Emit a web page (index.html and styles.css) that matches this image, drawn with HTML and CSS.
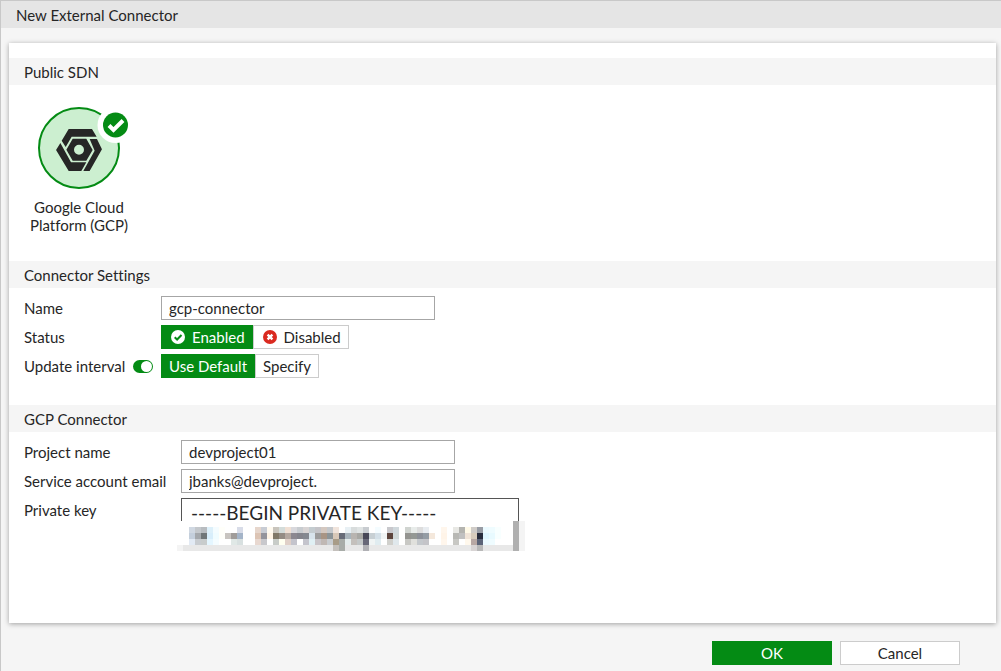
FILE: index.html
```
<!DOCTYPE html>
<html lang="en">
<head>
    <meta charset="utf-8">
    <title>New External Connector</title>
    <link rel="stylesheet" href="styles.css">
</head>
<body>
    <form class="dialog">
        <h1 class="dialog-title">New External Connector</h1>

        <div class="panel">
            <!-- Connector type -->
            <section class="section">
                <h2>Public SDN</h2>
                <button type="button" class="tile">
                    <svg class="tile-icon" viewBox="0 0 82 82" aria-hidden="true">
                        <circle cx="41" cy="41" r="40" fill="#ccefd0" stroke="#048b14" stroke-width="2"/>
                        <svg x="17.7" y="21.7" width="46.6" height="42.6" viewBox="107 101 140 128">
                            <path fill="#262626" d="M146 102H216L230 125H155L137 156L125 137Z"/>
                            <path fill="#262626" d="M121 144L153 202H199L184 228H146L108 165Z"/>
                            <path fill="#262626" d="M209 132H231L246 163L209 228H190L224 167Z"/>
                            <path fill="#262626" fill-rule="evenodd" d="M158 131H199L218 165L199 197H158L139 164ZM177 149A15 15 0 1 0 177 179A15 15 0 1 0 177 149Z"/>
                        </svg>
                        <circle cx="77.5" cy="18" r="18" fill="#fff"/>
                        <circle cx="77.5" cy="18" r="12.5" fill="#048b14"/>
                        <path d="M71 18.5L75.5 23L85 13.5" fill="none" stroke="#fff" stroke-width="4"/>
                    </svg>
                    <span>Google Cloud Platform (GCP)</span>
                </button>
            </section>

            <!-- General settings -->
            <section class="section settings">
                <h2>Connector Settings</h2>
                <div class="row">
                    <label class="label" for="name">Name</label>
                    <input type="text" class="field" id="name" value="gcp-connector">
                </div>
                <div class="row">
                    <span class="label" id="status-label">Status</span>
                    <div class="choice" role="radiogroup" aria-labelledby="status-label">
                        <label class="option">
                            <input type="radio" name="status" checked>
                            <svg class="icon" viewBox="0 0 14 14" aria-hidden="true">
                                <circle cx="7" cy="7" r="7" fill="#fff"/>
                                <path d="M3.7 7.2L6.1 9.5L10.5 5" fill="none" stroke="#048b14" stroke-width="2"/>
                            </svg>
                            Enabled
                        </label>
                        <label class="option">
                            <input type="radio" name="status">
                            <svg class="icon" viewBox="0 0 14 14" aria-hidden="true">
                                <circle cx="7" cy="7" r="7" fill="#da2a20"/>
                                <path d="M4.6 4.6L9.4 9.4M9.4 4.6L4.6 9.4" stroke="#fff" stroke-width="2.4"/>
                            </svg>
                            Disabled
                        </label>
                    </div>
                </div>
                <div class="row">
                    <div class="label">
                        <label for="interval">Update interval</label>
                        <input type="checkbox" class="switch" id="interval" checked>
                    </div>
                    <div class="choice" role="radiogroup" aria-label="Update interval">
                        <label class="option"><input type="radio" name="interval" checked>Use Default</label>
                        <label class="option"><input type="radio" name="interval">Specify</label>
                    </div>
                </div>
            </section>

            <!-- GCP settings -->
            <section class="section gcp">
                <h2>GCP Connector</h2>
                <div class="row">
                    <label class="label" for="project">Project name</label>
                    <input type="text" class="field" id="project" value="devproject01">
                </div>
                <div class="row">
                    <label class="label" for="email">Service account email</label>
                    <input type="text" class="field" id="email" value="jbanks@devproject.">
                </div>
                <div class="row key-row">
                    <label class="label" for="key">Private key</label>
                    <div class="key">
                        <textarea id="key" rows="1">-----BEGIN PRIVATE KEY-----</textarea>
                        <svg class="mask" id="mask" viewBox="0 0 58 5" shape-rendering="crispEdges" aria-hidden="true"></svg>
                    </div>
                </div>
            </section>
        </div>

        <div class="actions">
            <button type="submit" class="primary">OK</button>
            <button type="button">Cancel</button>
        </div>
    </form>
    <script src="mask.js"></script>
</body>
</html>
```
FILE: styles.css
```
* {
    box-sizing: border-box;
}
body {
    margin: 0;
    background-color: #f5f5f5;
    color: #262626;
    font-family: Lato, sans-serif;
    font-size: 15px;
    font-variant-ligatures: none;
    line-height: 18px;
}
button, input, textarea {
    color: inherit;
    font: inherit;
    font-variant-ligatures: none;
}
h1, h2 {
    margin: 0;
    font-size: 15px;
    font-weight: normal;
}
.dialog {
    display: flex;
    flex-direction: column;
    min-height: 100vh;
    border: solid #c8c8c8;
    border-width: 1px 0 0 1px;
}
.dialog-title {
    padding: 5px 15px 4px;
    background-color: #e5e5e5;
}
.panel {
    flex: 1;
    margin: 15px 5px 0 8px;
    padding-top: 15px;
    background-color: #fff;
    box-shadow: 0 1px 5px rgba(0, 0, 0, 0.35);
}
.section h2 {
    padding: 5px 15px 4px;
    margin-bottom: 8px;
    background-color: #f5f5f5;
}
.tile {
    display: flex;
    flex-direction: column;
    align-items: center;
    gap: 9px;
    width: 110px;
    margin: 22px 0 27px 15px;
    padding: 0;
    border: none;
    background: none;
    cursor: pointer;
}
.tile-icon {
    width: 82px;
    height: 82px;
    overflow: visible;
}

/* Form rows */
.row {
    display: flex;
    align-items: center;
    margin-bottom: 5px;
    padding-left: 15px;
}
.label {
    display: flex;
    align-items: center;
    justify-content: space-between;
    width: 137px;
    padding-right: 8px;
}
.settings {
    margin-bottom: 27px;
}
.gcp .label {
    width: 157px;
    padding-right: 0;
}
.field {
    width: 274px;
    height: 24px;
    padding: 0 7px;
    border: 1px solid #a6a6a6;
    background-color: #fff;
}
.choice {
    display: flex;
}
.option {
    display: flex;
    align-items: center;
    height: 24px;
    padding: 0 7px;
    border: 1px solid #ccc;
    cursor: pointer;
}
.option:has(input:checked) {
    border-color: #048b14;
    background-color: #048b14;
    color: #fff;
}
.option input {
    appearance: none;
    width: 0;
    margin: 0;
}
.icon {
    width: 14px;
    height: 14px;
    margin: 0 7px 0 2px;
}
.switch {
    display: flex;
    appearance: none;
    align-items: center;
    width: 20px;
    height: 13px;
    margin: 0;
    padding: 1px;
    border-radius: 7px;
    background-color: #999;
}
.switch::before {
    content: "";
    width: 11px;
    height: 11px;
    border-radius: 50%;
    background-color: #fff;
}
.switch:checked {
    justify-content: flex-end;
    background-color: #048b14;
}

/* Private key */
.key-row {
    align-items: flex-start;
}
.key-row .label {
    padding-top: 3px;
}
.key {
    position: relative;
}
.key textarea {
    display: block;
    width: 338px;
    height: 29px;
    padding: 2px 9px 0;
    border: 1px solid #555;
    border-bottom: none;
    font-size: 19px;
    line-height: 24px;
    overflow: hidden;
    resize: none;
}
.mask {
    position: absolute;
    top: 23px;
    left: -4px;
    width: 348px;
    height: 30px;
}

.actions {
    display: flex;
    justify-content: flex-end;
    gap: 8px;
    padding: 18px 41px 6px;
}
.actions button {
    width: 120px;
    height: 24px;
    padding: 0;
    border: 1px solid #ccc;
    background-color: #fff;
    cursor: pointer;
}
.actions .primary {
    border-color: #048b14;
    background-color: #048b14;
    color: #fff;
}
```
FILE: mask.js
```
// Blocks that hide the key, one list per row: column, colour
const rows = [
    '',
    '2 d0d8e2 3 c4c8cc 4 b8bcc0 5 ddf0fa 6 f4fcff 7 fffffa 10 d8dce8 13 e6d6cc 14 c8ccd4 15 fffaf0 16 c8c4bc 17 d4dcda 18 f0e0d4 19 d8d8dc 20 c8ccd0 21 d8d4d4 22 c4ccd0 23 c4c4c8 24 d4c8c0 25 c4c8cc 26 f0e4dc 28 e8f0f4 29 d8dcdc 30 e0e4e4 31 c8ccd0 33 f4fcff 35 c8c8cc 36 d0d8dc 38 d0d4d0 39 e8ecea 40 dddddd 41 e8ecf0 44 fff6ec 46 e8e8e4 47 b4b4b0 48 fffae8 49 d0ccc8 50 989ca4 51 ecfaff 52 effcff 53 f8ffff',
    '2 c4cfdc 3 a4a8ac 4 707678 5 d8eefb 6 f0fcff 7 fffffa 8 c8c4c0 9 a09c9a 10 a4b4c8 13 dcc4b4 14 94949c 15 fff4e6 16 807868 17 948c84 18 b4a8a0 19 8c8890 20 84848c 21 848890 22 d8e4ec 23 9c9c9c 24 a89484 25 8c9498 26 d8c8b8 27 686c78 28 a8b4bc 29 b8b4b0 30 a8a8a4 31 484858 32 c8d0d4 33 d4e0e8 34 f0f4f4 35 5c443c 36 d0d8d8 38 949490 39 949894 40 8c9098 41 949ca4 42 f4e8dc 44 fff4e8 46 b8b8b4 47 c0c0c0 48 f0e4d8 49 d8ccbc 50 282c3c 51 e0f6ff 52 e8faff 53 f8ffff',
    '2 e2eaf4 3 c8ccd0 4 c8cccc 5 e4f6ff 6 f4fcff 9 e0e8e6 10 d8e0e0 13 e8d8d0 14 c8c8cc 16 c8ccc8 17 fffff0 18 e0d0c8 19 c4c4cc 21 c4c4cc 22 e0f0f4 23 c8c4c8 24 c0b8b4 25 c8ccd0 26 a89c88 27 a8aca8 28 e4ecec 29 c4c0bc 30 c4c8c8 31 686878 32 f0f4f4 33 e0ecf0 35 d0d0cc 36 e0e8ec 38 c8c8c4 39 e0e0dc 40 c4c8cc 41 c4c4c8 44 fff6ec 46 c8c8c4 48 fff8ec 49 b8a8a4 50 5c6478 51 ecfaff 52 effcff',
    '26 c4c0bc 27 a8aca8 31 b0b0b4 49 d8d4d4 50 b8b8b8'
];
const mask = document.getElementById('mask');

function block(x, y, width, height, fill) {
    const rect = document.createElementNS('http://www.w3.org/2000/svg', 'rect');
    Object.entries({ x, y, width, height, fill }).forEach(([key, value]) => rect.setAttribute(key, value));
    mask.appendChild(rect);
}

block(0, 0, 58, 5, '#ffffff');
block(0, 4, 1, 1, '#f4f4f4');
block(1, 4, 55, 1, '#e8e8e8');
rows.forEach((row, y) => {
    const parts = row.split(' ');
    for (let i = 0; i + 1 < parts.length; i += 2) {
        block(parts[i], y, 1, 1, '#' + parts[i + 1]);
    }
});
block(56, 0, 1, 5, '#b0b0b0');
block(57, 0, 1, 5, '#f4f4f4');
```
